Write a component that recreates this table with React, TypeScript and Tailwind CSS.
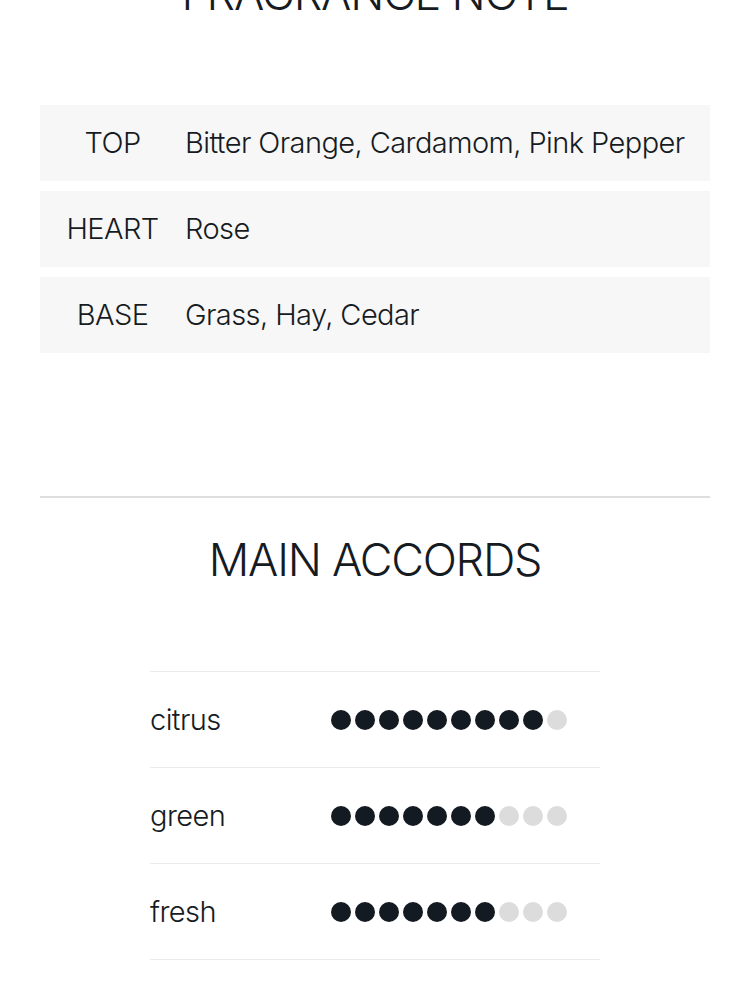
const notes = [
  { label: "TOP", value: "Bitter Orange, Cardamom, Pink Pepper" },
  { label: "HEART", value: "Rose" },
  { label: "BASE", value: "Grass, Hay, Cedar" },
]

const accords = [
  { name: "citrus", score: 9 },
  { name: "green", score: 7 },
  { name: "fresh", score: 7 },
]

function Dots({ score }: { score: number }) {
  return (
    <div className="flex gap-1 ml-px">
      {Array.from({ length: 10 }).map((_, i) => (
        <span
          key={i}
          className={`block w-5 h-5 rounded-full ${i < score ? "bg-[#141a21]" : "bg-[#dcdcdc]"}`}
        />
      ))}
    </div>
  )
}

export default function App() {
  return (
    <div className="bg-white text-[#161b22] px-10 font-['Inter',sans-serif] min-h-[1000px] overflow-hidden">
      {/* fragrance notes */}
      <section className="-mt-[29px]">
        <h2 className="text-center text-[45px] leading-none font-light tracking-[-0.028em] mb-[89px]">FRAGRANCE NOTE</h2>
        <div className="flex flex-col gap-[10px]">
          {notes.map((n) => (
            <div key={n.label} className="flex items-center h-[76px] bg-[#f7f7f7] text-[29px] font-light tracking-[-0.02em]">
              <div className="w-[145px] text-center">{n.label}</div>
              <div>{n.value}</div>
            </div>
          ))}
        </div>
      </section>

      <hr className="mt-[143px] border-0 border-t-2 border-[#dedede]" />

      {/* main accords */}
      <section className="pt-[39px]">
        <h2 className="text-center text-[45px] leading-none font-light tracking-[-0.028em] mb-[89px]">MAIN ACCORDS</h2>
        <div className="w-[450px] mx-auto border-t border-[#ebebeb]">
          {accords.map((a) => (
            <div key={a.name} className="flex items-center h-[96px] border-b border-[#ebebeb]">
              <div className="w-[180px] text-[29px] font-light tracking-[-0.02em]">{a.name}</div>
              <Dots score={a.score} />
            </div>
          ))}
        </div>
      </section>
    </div>
  )
}
